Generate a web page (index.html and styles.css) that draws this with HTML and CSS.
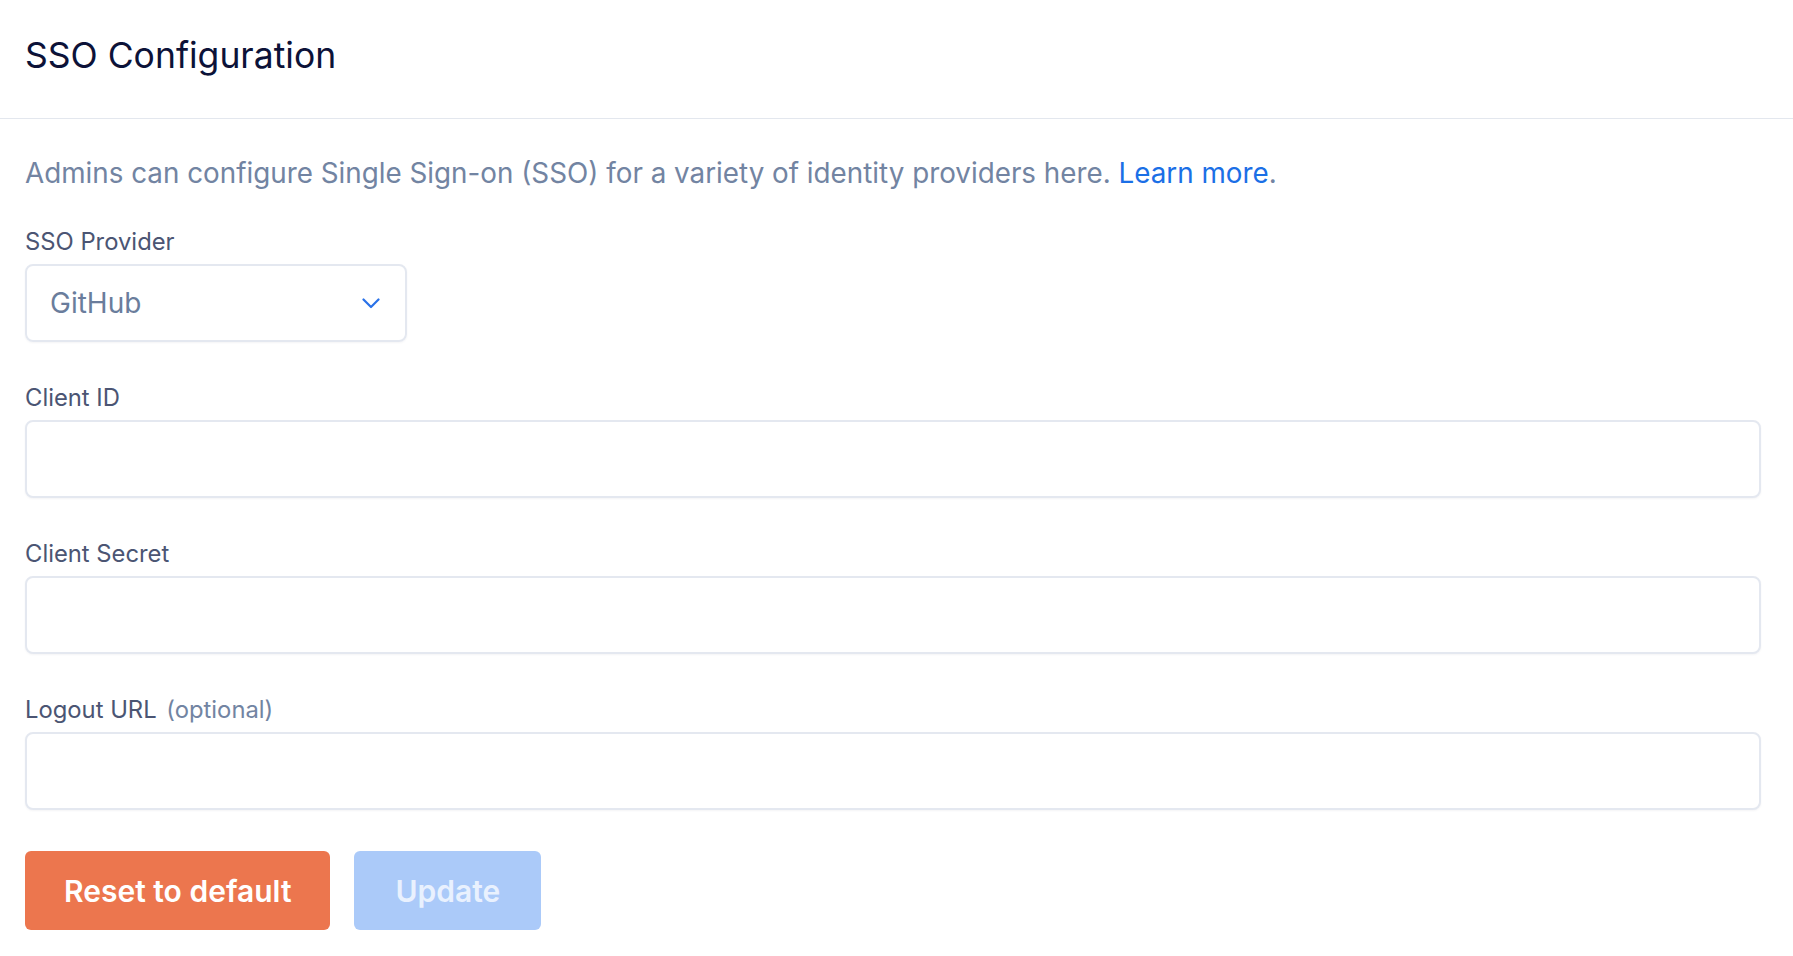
FILE: index.html
```html
<!DOCTYPE html>
<html lang="en">
<head>
<meta charset="utf-8">
<title>SSO Configuration</title>
<link rel="stylesheet" href="styles.css">
</head>
<body>
<header class="page-header">
  <h1 class="page-title">SSO Configuration</h1>
</header>
<main class="content">
  <p class="intro">Admins can configure Single Sign-on (SSO) for a variety of identity providers here. <a class="link" href="#">Learn more</a>.</p>
  <form class="form">
    <div class="field">
      <label class="label">SSO Provider</label>
      <div class="select">
        <span class="select-value">GitHub</span>
        <svg class="chevron" width="18" height="11" viewBox="0 0 18 11" fill="none"><path d="M1.5 1.5 L9 9 L16.5 1.5" stroke="#2a72e8" stroke-width="2.2" stroke-linecap="round" stroke-linejoin="round"/></svg>
      </div>
    </div>
    <div class="field">
      <label class="label">Client ID</label>
      <input class="input" type="text">
    </div>
    <div class="field">
      <label class="label">Client Secret</label>
      <input class="input" type="text">
    </div>
    <div class="field">
      <label class="label">Logout URL <span class="optional">(optional)</span></label>
      <input class="input" type="text">
    </div>
    <div class="actions">
      <button type="button" class="btn btn-reset">Reset to default</button>
      <button type="button" class="btn btn-update">Update</button>
    </div>
  </form>
</main>
</body>
</html>
```
FILE: styles.css
```css
* { box-sizing: border-box; }
html, body {
  margin: 0;
  background: #ffffff;
  font-family: Inter, "Noto Sans", sans-serif;
}
.page-header {
  height: 119px;
  padding: 36px 25px 0;
  border-bottom: 1px solid #e3e7ee;
}
.page-title {
  margin: 0;
  font-size: 35.5px;
  line-height: 40px;
  font-weight: 400;
  color: #0c1238;
}
.content {
  padding: 36px 32px 0 25px;
}
.intro {
  margin: 0;
  font-size: 27.8px;
  line-height: 36px;
  color: #7284a2;
}
.link {
  color: #1b6fe6;
  text-decoration: none;
}
.form {
  margin-top: 35px;
  display: flex;
  flex-direction: column;
}
.field {
  display: flex;
  flex-direction: column;
  gap: 6px;
  margin-bottom: 40px;
}
.label {
  font-size: 23.8px;
  line-height: 32px;
  color: #4b5573;
}
.optional {
  color: #7284a2;
  margin-left: 3px;
}
.select {
  width: 382px;
  height: 78px;
  border: 2px solid #e4e8f0;
  border-radius: 8px;
  box-shadow: 0 1px 2px rgba(30, 40, 80, 0.05);
  display: flex;
  align-items: center;
  justify-content: space-between;
  padding: 0 25px 0 23px;
}
.select-value {
  font-size: 28px;
  color: #6a7d9c;
}
.chevron { display: block; }
.input {
  width: 100%;
  height: 78px;
  border: 2px solid #e4e8f0;
  border-radius: 8px;
  box-shadow: 0 1px 2px rgba(30, 40, 80, 0.05);
  background: #fff;
  font: inherit;
  outline: none;
}
.actions {
  display: flex;
  gap: 24px;
  margin-top: 1px;
}
.btn {
  height: 79px;
  border: none;
  border-radius: 6px;
  padding: 0 39px;
  font-family: Inter, "Noto Sans", sans-serif;
  font-size: 30px;
  font-weight: 600;
  cursor: pointer;
}
.btn-reset {
  background: #ec764e;
  color: #ffffff;
}
.btn-update {
  background: #abcaf9;
  color: #e9f1fe;
  padding: 0 41px;
}
```
